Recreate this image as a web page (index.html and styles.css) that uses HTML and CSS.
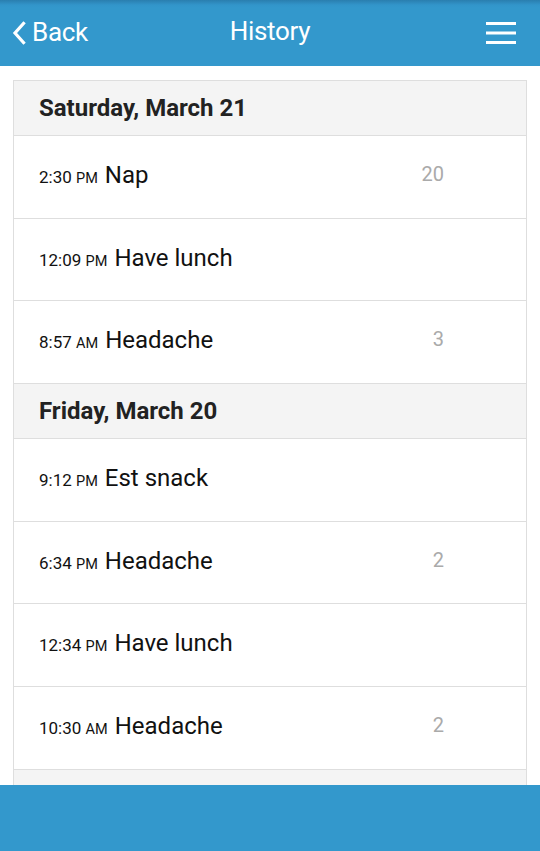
FILE: index.html
```html
<!DOCTYPE html>
<html>
<head>
<meta charset="utf-8">
<link rel="stylesheet" href="styles.css">
</head>
<body>
<div class="app">
  <header class="topbar">
    <div class="back">
      <svg class="chev" width="14" height="24" viewBox="0 0 14 24"><path d="M11.5 2.5 L3 12 L11.5 21.5" fill="none" stroke="#fff" stroke-width="3.2" stroke-linecap="square"/></svg>
      <span>Back</span>
    </div>
    <div class="title">History</div>
    <div class="menu">
      <svg width="30" height="22" viewBox="0 0 30 22"><rect x="0" y="0" width="30" height="3" fill="#fff"/><rect x="0" y="9.5" width="30" height="3" fill="#fff"/><rect x="0" y="19" width="30" height="3" fill="#fff"/></svg>
    </div>
  </header>
  <main class="content">
    <div class="card">
      <div class="day">Saturday, March 21</div>
      <div class="item"><span class="time">2:30 <span class="ap">PM</span></span><span class="name">Nap</span><span class="val">20</span></div>
      <div class="item"><span class="time">12:09 <span class="ap">PM</span></span><span class="name">Have lunch</span><span class="val"></span></div>
      <div class="item"><span class="time">8:57 <span class="ap">AM</span></span><span class="name">Headache</span><span class="val">3</span></div>
      <div class="day">Friday, March 20</div>
      <div class="item"><span class="time">9:12 <span class="ap">PM</span></span><span class="name">Est snack</span><span class="val"></span></div>
      <div class="item"><span class="time">6:34 <span class="ap">PM</span></span><span class="name">Headache</span><span class="val">2</span></div>
      <div class="item"><span class="time">12:34 <span class="ap">PM</span></span><span class="name">Have lunch</span><span class="val"></span></div>
      <div class="item"><span class="time">10:30 <span class="ap">AM</span></span><span class="name">Headache</span><span class="val">2</span></div>
      <div class="day">Thursday, March 19</div>
    </div>
  </main>
  <footer class="bottombar"></footer>
</div>
</body>
</html>
```

FILE: styles.css
```css
* { box-sizing: border-box; }
html, body { margin: 0; padding: 0; }
body {
  font-family: Roboto, "Noto Sans", sans-serif;
  background: #fff;
  width: 540px;
  height: 851px;
  overflow: hidden;
}
.app {
  position: relative;
  width: 540px;
  height: 851px;
  overflow: hidden;
}
.topbar {
  height: 66px;
  background: linear-gradient(to bottom, #2a7eaf 0px, #3295ca 5px, #3398cc 8px, #3398cc 100%);
  color: #fff;
  display: flex;
  align-items: center;
  justify-content: space-between;
  padding: 0 24px 2px 12px;
  position: relative;
}
.back {
  display: flex;
  align-items: center;
  gap: 6px;
  font-size: 26px;
}
.back span { letter-spacing: -0.3px; }
.chev { margin-top: 1px; }
.title {
  position: absolute;
  left: 0;
  right: 0;
  text-align: center;
  font-size: 26px;
  letter-spacing: -0.3px;
  pointer-events: none;
  top: 16px;
}
.menu { display: flex; align-items: center; margin-top: 1px; }
.content {
  padding: 14px 13px 0 13px;
}
.card {
  border: 1px solid #dedede;
  border-bottom: none;
}
.day {
  height: 55px;
  background: #f4f4f4;
  border-bottom: 1px solid #dedede;
  display: flex;
  align-items: center;
  padding-left: 25px;
  font-weight: 700;
  font-size: 24px;
  color: #222;
  padding-bottom: 0;
}
.item {
  height: 82.7px;
  border-bottom: 1px solid #dedede;
  display: flex;
  align-items: baseline;
  padding: 25px 82px 0 25px;
  background: #fff;
  color: #111;
}
.time {
  font-size: 17px;
  margin-right: 7px;
  color: #111;
}
.ap { font-size: 14.5px; }
.name {
  font-size: 24px;
  flex: 1;
}
.val {
  font-size: 20px;
  color: #aaa;
  position: relative;
  top: -2px;
}
.bottombar {
  position: absolute;
  left: 0;
  right: 0;
  bottom: 0;
  height: 66px;
  background: #3398cc;
}
```
